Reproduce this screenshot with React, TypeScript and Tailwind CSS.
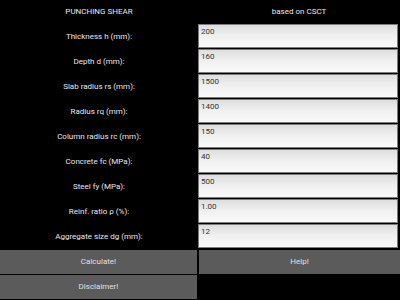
import React from 'react';

const FIELDS: [string, string][] = [
  ['Thickness h (mm):', '200'],
  ['Depth d (mm):', '160'],
  ['Slab radius rs (mm):', '1500'],
  ['Radius rq (mm):', '1400'],
  ['Column radius rc (mm):', '150'],
  ['Concrete fc (MPa):', '40'],
  ['Steel fy (MPa):', '500'],
  ['Reinf. ratio ρ (%):', '1.00'],
  ['Aggregate size dg (mm):', '12'],
];

export default function App() {
  return (
    <div className="w-[400px] h-[300px] bg-black text-[8px] overflow-hidden" style={{ fontFamily: 'Roboto, "Noto Sans", sans-serif' }}>
      <div className="grid grid-cols-[198px_202px] h-[24px] items-center text-[#e8e8e8]">
        <div className="text-center">PUNCHING SHEAR</div>
        <div className="text-center">based on CSCT</div>
      </div>
      {FIELDS.map(([label, value]) => (
        <div key={label} className="grid grid-cols-[198px_202px] h-[25px]">
          <div className="flex items-center justify-center text-[#e8e8e8]">{label}</div>
          <div className="h-[25px] pb-[1px] pr-[2px]">
            <div className="h-full border border-[#7c7c7c] bg-gradient-to-b from-[#dedede] via-[#f0f0f0] to-[#fafafa] text-[#333] pl-[2px] pt-[2px] leading-[10px]">
              {value}
            </div>
          </div>
        </div>
      ))}
      <div className="grid grid-cols-[197px_201px] gap-x-[2px] mt-[1px]">
        <button className="h-[24px] bg-[#5b5b5b] text-[#e0e0e0]">Calculate!</button>
        <button className="h-[24px] bg-[#5b5b5b] text-[#e0e0e0]">Help!</button>
      </div>
      <div className="grid grid-cols-[197px_201px] gap-x-[2px] mt-[1px]">
        <button className="h-[24px] bg-[#5b5b5b] text-[#e0e0e0]">Disclaimer!</button>
        <div />
      </div>
    </div>
  );
}
